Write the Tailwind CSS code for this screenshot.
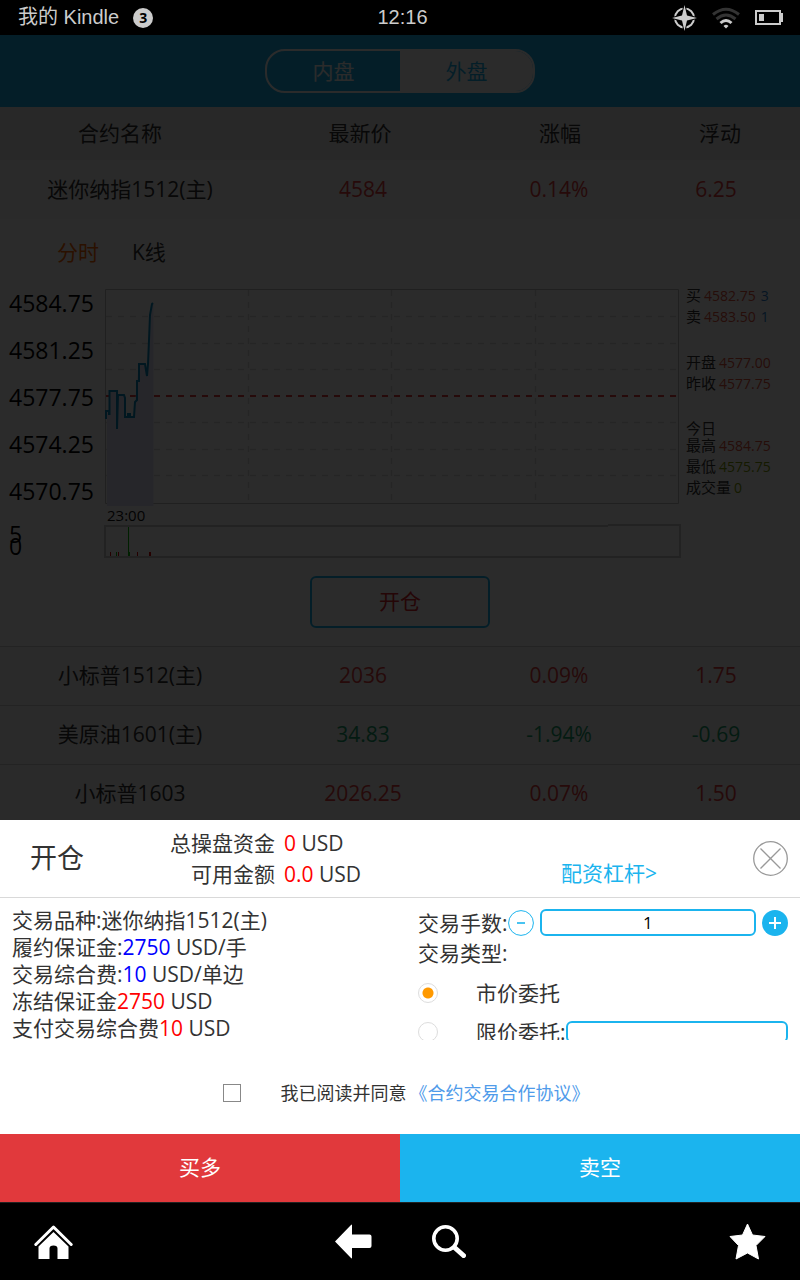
<!DOCTYPE html>
<html lang="zh-CN">
<head>
<meta charset="utf-8">
<meta name="viewport" content="width=device-width, initial-scale=1">
<title>开仓</title>
<script src="https://cdn.jsdelivr.net/npm/@tailwindcss/browser@4"></script>
</head>
<body class="bg-black">
<div class="flex h-screen flex-col font-['Open_Sans','Noto_Sans_CJK_SC',sans-serif] text-[21px] text-[#333]">

  <!-- Device status bar -->
  <header class="grid h-[35px] shrink-0 grid-cols-[1fr_auto_1fr] items-center bg-black pr-[17px] pl-[18px] font-['Liberation_Sans','Noto_Sans_CJK_SC',sans-serif] text-[20px] leading-[35px] text-[#ccc]">
    <div class="flex items-center gap-[14px]">
      <span>我的 Kindle</span>
      <span class="flex size-5 items-center justify-center rounded-full bg-[#ccc] font-['Noto_Sans',sans-serif] text-[14px] font-bold text-black">3</span>
    </div>
    <time class="pl-1">12:16</time>
    <div class="flex items-center justify-end gap-[15px]">
      <svg class="h-[26px] w-[25px]" viewBox="0 0 25 26" aria-label="定位">
        <circle cx="12.500" cy="13" r="9.500" fill="none" stroke="#ccc" stroke-width="2"/>
        <path d="M12.500 0 L15 10.500 L25 13 L15 15.500 L12.500 26 L10 15.500 L0 13 L10 10.500 Z" fill="#ccc" stroke="#000" stroke-width="2" paint-order="stroke"/>
      </svg>
      <svg class="h-[22px] w-[28px]" viewBox="0 0 28 22" fill="none" aria-label="Wi-Fi">
        <path d="M1 7.500 Q14 -3 27 7.500" stroke="#333" stroke-width="3"/>
        <path d="M4.500 12 Q14 4 23.500 12" stroke="#333" stroke-width="3"/>
        <path d="M8.500 16 Q14 11 19.500 16" stroke="#ccc" stroke-width="3"/>
        <path d="M14 21.500 L11.500 19 Q14 16.500 16.500 19 Z" fill="#ccc"/>
      </svg>
      <svg class="h-[15px] w-[28px]" viewBox="0 0 28 15" aria-label="电池">
        <rect x="1" y="1" width="24" height="13" fill="none" stroke="#ccc" stroke-width="2"/>
        <path d="M4 4h5v7H4zM26 3h2v9h-2z" fill="#ccc"/>
      </svg>
    </div>
  </header>

  <!-- Quote page behind the order sheet -->
  <main class="relative min-h-0 flex-1 overflow-hidden bg-white">
    <nav class="flex h-[72px] items-center justify-center bg-[#1bb4ee]">
      <div class="flex h-11 w-[270px] overflow-hidden rounded-[20px] border-2 border-white leading-10">
        <button type="button" class="flex-1 text-white">内盘</button>
        <button type="button" class="flex-1 bg-white text-[#1bb4ee]">外盘</button>
      </div>
    </nav>

    <table class="block w-full text-center">
      <thead class="block bg-[#ececec]">
        <tr class="grid h-[53px] grid-cols-[3fr_3fr_2fr_2fr] items-center">
          <th class="font-normal">合约名称</th><th class="font-normal">最新价</th><th class="font-normal">涨幅</th><th class="font-normal">浮动</th>
        </tr>
      </thead>
      <tbody class="block bg-[#f7f7f7] text-[#e13b3d]">
        <tr class="grid h-[59px] grid-cols-[260fr_206fr_186fr_128fr] items-center pr-5">
          <td class="text-[#333]">迷你纳指1512(主)</td><td>4584</td><td>0.14%</td><td>6.25</td>
        </tr>
      </tbody>
    </table>

    <section class="flex flex-col">
      <div class="mt-[19px] flex gap-[33px] pl-[57px] leading-7">
        <button type="button" class="text-[#ff6600]">分时</button>
        <button type="button">K线</button>
      </div>
      <div class="mt-[14px] flex items-start">
        <div class="w-[104px] pl-[9px] text-[23px] leading-[47px] text-black">
          <div>4584.75</div><div>4581.25</div><div>4577.75</div><div>4574.25</div><div>4570.75</div>
          <div class="mt-[13px] leading-3">5</div><div class="leading-3">0</div>
        </div>
        <div class="mt-2 min-w-0 flex-1">
          <svg class="block h-[219px] w-full" viewBox="104 288 577 219" preserveAspectRatio="none" fill="none">
            <path d="M105.500 289.500H678.500V503.500H105.500Z" stroke="#bbb"/>
            <path d="M106 316.500H678M106 343.500H678M106 369.500H678M106 422.500H678M106 449.500H678M106 475.500H678M248.500 290V503M391.500 290V503M535.500 290V503" stroke="#d8d8d8" stroke-width="1.500" stroke-dasharray="6 6"/>
            <path d="M106 396H678" stroke="#e13b3d" stroke-width="2" stroke-dasharray="6 6"/>
            <path d="M107 506V411L109 414L110 391H117V429L118 395H124L125 417H134L137 381L139 364H145L147 376L149 340L152 304H153.500V506Z" fill="#dfe0f8"/>
            <path d="M106 419V411H109V414H109.500V391H117V429L118 395H124L125 398V417H128V414H130V417H134L135 402L137 400V381H139V364H145L147 376L148 364L149 340L150 315L152 304L153 303" stroke="#078bbd" stroke-width="2"/>
          </svg>
          <div class="pl-[3px] text-[15px] leading-[17px] text-[#111]">23:00</div>
          <svg class="block h-[34px] w-full" viewBox="104 524 577 34" preserveAspectRatio="none" fill="none">
            <path d="M608 526H105V557H680V525H608" stroke="#c8c8c8" stroke-width="2"/>
            <path d="M128.500 527V556M116.500 552V556M129.500 552V556" stroke="#0b0"/>
            <path d="M110.500 552V556M118.500 552V556M137.500 552V556M149.500 552V556M150.500 552V556" stroke="#d00"/>
          </svg>
        </div>
        <div class="mt-[5px] w-[119px] pl-[5px] text-[15px] leading-[21px]">
          <div class="flex gap-[3px]">买<span class="text-[14px] text-[#e0523c]">4582.75</span><span class="pl-[2px] text-[14px] text-[#2a7fd0]">3</span></div>
          <div class="flex gap-[3px]">卖<span class="text-[14px] text-[#e0523c]">4583.50</span><span class="pl-[2px] text-[14px] text-[#2a7fd0]">1</span></div>
          <div class="mt-[25px] flex gap-[3px]">开盘<span class="text-[14px] text-[#e0523c]">4577.00</span></div>
          <div class="flex gap-[3px]">昨收<span class="text-[14px] text-[#e0523c]">4577.75</span></div>
          <div class="mt-[27px] leading-[14px]">今日</div>
          <div class="flex gap-[3px]">最高<span class="text-[14px] text-[#e0523c]">4584.75</span></div>
          <div class="flex gap-[3px]">最低<span class="text-[14px] text-[#7d9a00]">4575.75</span></div>
          <div class="flex gap-[3px]">成交量<span class="text-[14px] text-[#7d9a00]">0</span></div>
        </div>
      </div>
      <button type="button" class="mt-[18px] mb-[18px] h-[52px] w-[180px] self-center rounded-md border-2 border-[#1bb4ee] text-[#d8282c]">开仓</button>
    </section>

    <table class="block w-full text-center">
      <tbody class="block bg-[#f7f7f7] text-[#e13b3d]">
        <tr class="grid h-[59px] grid-cols-[260fr_206fr_186fr_128fr] items-center border-t border-[#d0d0d0] pr-5">
          <td class="text-[#333]">小标普1512(主)</td><td>2036</td><td>0.09%</td><td>1.75</td>
        </tr>
        <tr class="grid h-[59px] grid-cols-[260fr_206fr_186fr_128fr] items-center border-t border-[#d0d0d0] pr-5 text-[#1a9f6b]">
          <td class="text-[#333]">美原油1601(主)</td><td>34.83</td><td>-1.94%</td><td>-0.69</td>
        </tr>
        <tr class="grid h-[59px] grid-cols-[260fr_206fr_186fr_128fr] items-center border-t border-[#d0d0d0] pr-5">
          <td class="text-[#333]">小标普1603</td><td>2026.25</td><td>0.07%</td><td>1.50</td>
        </tr>
      </tbody>
    </table>

    <div class="absolute inset-0 bg-black/83"></div>
  </main>

  <!-- Order sheet -->
  <form class="shrink-0 bg-white">
    <div class="flex h-[78px] items-center border-b border-[#d9d9d9] pr-3 pl-[30px]">
      <h1 class="w-[140px] text-[27px]">开仓</h1>
      <dl class="grid grid-cols-[105px_auto] gap-x-[9px] leading-[31px]">
        <dt class="text-right">总操盘资金</dt><dd><span class="text-[#f00]">0</span> USD</dd>
        <dt class="text-right">可用金额</dt><dd><span class="text-[#f00]">0.0</span> USD</dd>
      </dl>
      <a href="#" class="mr-24 ml-auto self-end pb-[8px] leading-[31px] text-[#1bb4ee]">配资杠杆&gt;</a>
      <button type="button" aria-label="关闭" class="size-[35px]">
        <svg class="size-[35px]" viewBox="0 0 35 35" fill="none" stroke="#999">
          <circle cx="17.500" cy="17.500" r="16.800" stroke-width="1.300"/>
          <path d="M7.500 7.500L27.500 27.500M27.500 7.500L7.500 27.500" stroke-width="1.300"/>
        </svg>
      </button>
    </div>

    <div class="grid h-[142px] grid-cols-[406fr_370fr] overflow-hidden px-3 pt-[9px]">
      <div class="min-w-0 leading-[27px]">
        <p>交易品种:迷你纳指1512(主)</p>
        <p>履约保证金:<span class="text-[#00f]">2750</span> USD/手</p>
        <p>交易综合费:<span class="text-[#00f]">10</span> USD/单边</p>
        <p>冻结保证金<span class="text-[#f00]">2750</span> USD</p>
        <p>支付交易综合费<span class="text-[#f00]">10</span> USD</p>
      </div>
      <div class="flex min-w-0 flex-col leading-[30px]">
        <div class="flex h-[31px] shrink-0 items-center">
          <label for="lots" class="shrink-0">交易手数:</label>
          <button type="button" aria-label="减少" class="size-[26px] shrink-0">
            <svg class="size-[26px]" viewBox="0 0 26 26" fill="none" stroke="#1bb4ee"><circle cx="13" cy="13" r="12.400"/><path d="M9 13H17" stroke-width="1.600"/></svg>
          </button>
          <input id="lots" type="text" value="1" class="mx-[6px] h-[27px] min-w-0 flex-1 rounded-md border-2 border-[#1bb4ee] bg-white text-center text-[17px] text-black">
          <button type="button" aria-label="增加" class="size-[26px] shrink-0">
            <svg class="size-[26px]" viewBox="0 0 26 26" fill="none"><circle cx="13" cy="13" r="13" fill="#1bb4ee"/><path d="M7 13H19M13 7V19" stroke="#fff" stroke-width="2"/></svg>
          </button>
        </div>
        <div class="h-[30px] shrink-0">交易类型:</div>
        <div class="mt-[5px] flex h-[39px] shrink-0 items-center">
          <input id="market" name="type" type="radio" checked class="size-5 appearance-none rounded-full border border-[#ddd] checked:bg-[radial-gradient(circle,#ff9900_5px,transparent_6px)]">
          <label for="market" class="pl-[38px]">市价委托</label>
        </div>
        <div class="flex h-[39px] shrink-0 items-center">
          <input id="limit" name="type" type="radio" class="size-5 shrink-0 appearance-none rounded-full border border-[#ddd] checked:bg-[radial-gradient(circle,#ff9900_5px,transparent_6px)]">
          <label for="limit" class="shrink-0 pl-[38px]">限价委托:</label>
          <input type="text" aria-label="限价" class="h-[22px] min-w-0 flex-1 rounded-md border-2 border-[#1bb4ee]">
        </div>
      </div>
    </div>

    <div class="flex h-[94px] items-center justify-center pt-[12px] pl-[12px] text-[18px]">
      <input id="agree" type="checkbox" class="mr-10 size-[18px] appearance-none border border-[#888] checked:bg-[#1bb4ee]">
      <label for="agree">我已阅读并同意</label>
      <a href="#" class="pl-[3px] text-[#4f9bea]">《合约交易合作协议》</a>
    </div>
    <div class="grid h-[68px] grid-cols-2 text-white">
      <button type="submit" class="bg-[#e1393c]">买多</button>
      <button type="submit" class="bg-[#1bb4ee]">卖空</button>
    </div>
  </form>

  <!-- Device navigation bar -->
  <nav class="grid h-[78px] shrink-0 grid-cols-[1fr_auto_1fr] items-center border-t border-[#222] bg-black px-[34px]">
    <button type="button" aria-label="主页" class="justify-self-start">
      <svg class="h-[36px] w-[39px]" viewBox="0 0 39 36" fill="#fff">
        <path d="M1.800 20.500L19.500 3L37.200 20.500" fill="none" stroke="#fff" stroke-width="3" stroke-linecap="round" stroke-linejoin="round"/>
        <path d="M4.500 22.500L19.500 8L34.500 22.500V35H23.500V24.500Q23.500 21.500 19.500 21.500Q15.500 21.500 15.500 24.500V35H4.500Z"/>
      </svg>
    </button>
    <div class="flex items-center gap-[60px]">
      <button type="button" aria-label="返回">
        <svg class="h-[35px] w-[37px]" viewBox="0 0 37 35" fill="#fff"><path d="M0 17.500L16 1Q17 0 17 1.500V10.500H34.500Q36.500 10.500 36.500 12.500V22Q36.500 24 34.500 24H17V33.500Q17 35 16 34Z"/></svg>
      </button>
      <button type="button" aria-label="搜索">
        <svg class="h-[33px] w-[34px]" viewBox="0 0 34 33" fill="none" stroke="#fff"><circle cx="13.500" cy="13.500" r="11.700" stroke-width="3.600"/><path d="M22.500 22.500L31.500 30.500" stroke-width="5" stroke-linecap="round"/></svg>
      </button>
    </div>
    <button type="button" aria-label="收藏" class="justify-self-end">
      <svg class="h-[37px] w-[37px]" viewBox="0 0 37 37" fill="#fff" stroke="#fff" stroke-linejoin="round"><path d="M18.500 1L23.500 12L36 13.500L27 22.500L29.500 36L18.500 30L7 36L9.500 22.500L1 13.500L13.500 12Z"/></svg>
    </button>
  </nav>
</div>
</body>
</html>
